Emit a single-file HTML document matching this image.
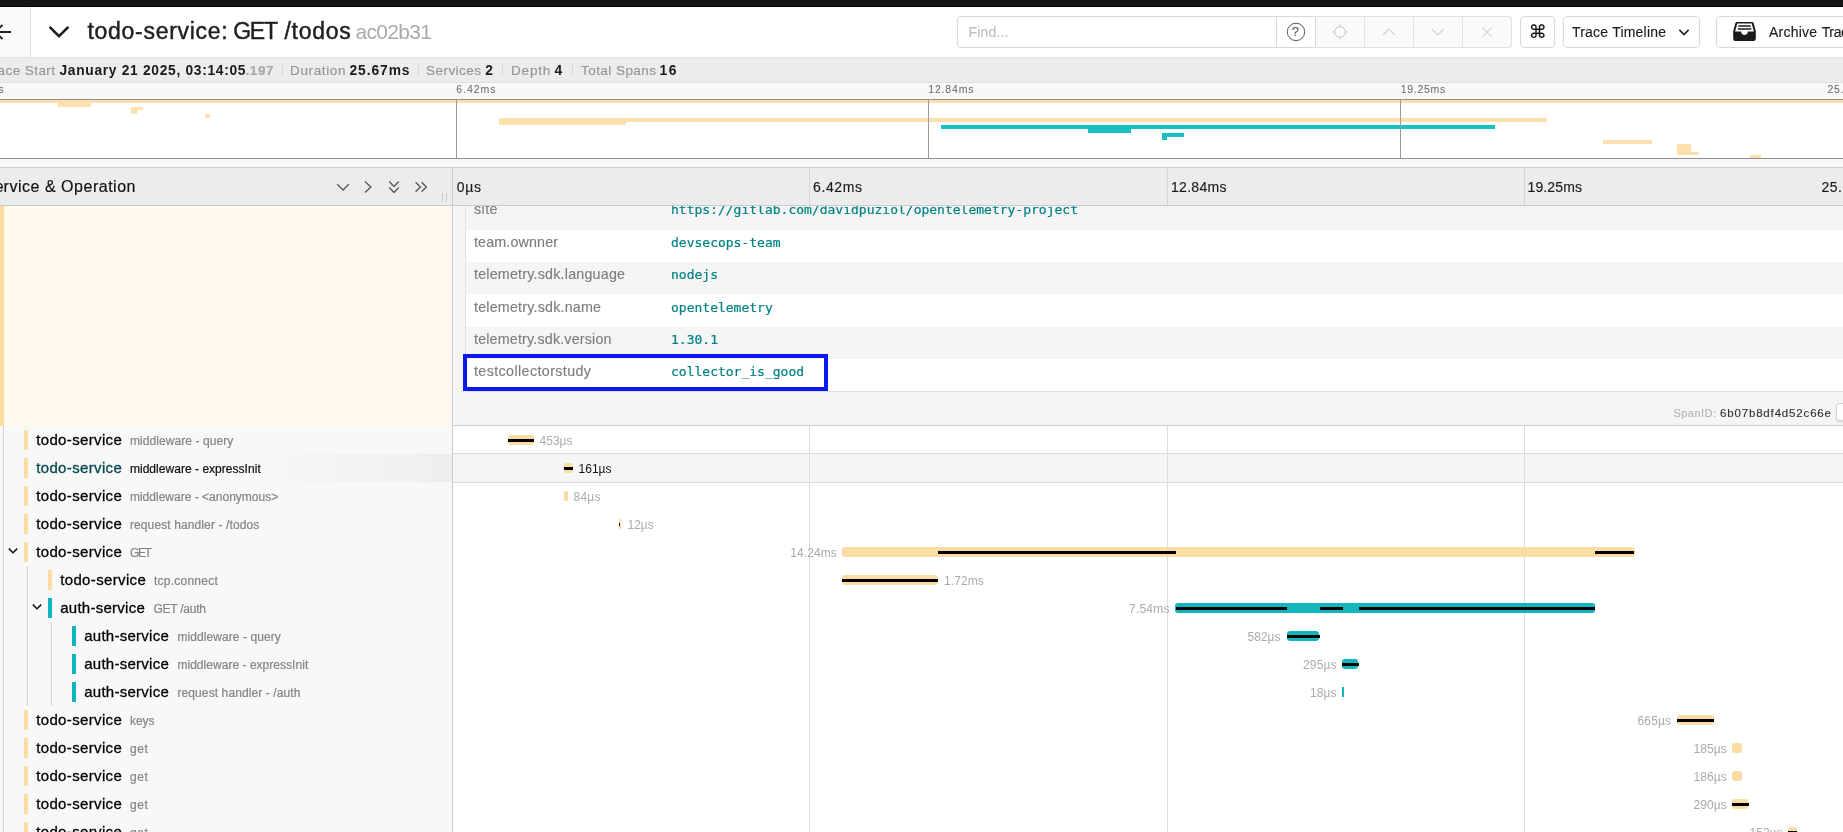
<!DOCTYPE html>
<html><head><meta charset="utf-8"><title>todo-service: GET /todos</title>
<style>
*{box-sizing:border-box;margin:0;padding:0}
html,body{width:1843px;height:832px;overflow:hidden;background:#fff}
body{font-family:"Liberation Sans",sans-serif;color:#222;position:relative;font-size:14px}
#root{position:absolute;left:0;top:0;width:1843px;height:832px;overflow:hidden;will-change:transform}
.a{position:absolute}
.t{position:absolute;white-space:nowrap;line-height:20px;height:20px}
svg{position:absolute;overflow:visible}
#topbar{left:0;top:0;width:1843px;height:7px;background:linear-gradient(#151515 0,#151515 6px,#020202 6px,#020202 7px)}
#hdr{left:0;top:7px;width:1843px;height:50px;background:#fff}
#hdrb{left:0;top:57px;width:1843px;height:1px;background:#e2e2e2}
#back{left:0;top:8px;width:30px;height:49px;background:#fafafa}
#backb{left:30px;top:7px;width:1px;height:50px;background:#dedede}
#sum{left:0;top:58px;width:1843px;height:24px;background:#ececec}
#sumb{left:0;top:82px;width:1843px;height:1px;background:#e0e0e0}
#ticks{left:0;top:83px;width:1843px;height:16px;background:#f8f8f8}
#mmtop{left:0;top:99px;width:1843px;height:1px;background:#8f8f8f}
#mm{left:0;top:100px;width:1843px;height:58px;background:#fff}
#mmbot{left:0;top:158px;width:1843px;height:1px;background:#8f8f8f}
#gap{left:0;top:159px;width:1843px;height:8px;background:#f8f8f8}
#thb1{left:0;top:167px;width:1843px;height:1px;background:#cbcbcb}
#th{left:0;top:168px;width:1843px;height:37px;background:#ececec}
#thb2{left:0;top:205px;width:1843px;height:1px;background:#cbcbcb}
.title{font-size:23px;color:#1f1f1f;-webkit-text-stroke:0.45px #1f1f1f}
.tid{font-size:21px;color:#aaa}
.sl{font-size:13.5px;color:#969696;-webkit-text-stroke:0.15px currentColor}
.sv{font-size:13.800px;color:#1a1a1a;font-weight:bold}
.sd{width:1px;height:12px;top:64px;background:#d8d8d8}
.mt{font-size:10.5px;color:#666}
.mtl{top:99px;width:1px;height:60px;background:#9a9a9a}
.btn{border:1px solid #d9d9d9;border-radius:4px;background:#fff;top:16px;height:32px}
.tl{font-size:14px;color:#1c1c1c;-webkit-text-stroke:0.15px currentColor}
.so{font-size:16px;color:#111;-webkit-text-stroke:0.18px #111}
.key{font-size:14.300px;color:#7d7d7d;-webkit-text-stroke:0.15px currentColor}
.val{font-family:"DejaVu Sans Mono","Liberation Mono",monospace;font-size:13px;color:#008284;-webkit-text-stroke:0.22px #008284}
.svc{font-size:15px;color:#000;-webkit-text-stroke:0.3px currentColor}
.op{font-size:12px;color:#858585;-webkit-text-stroke:0.22px currentColor}
.dur{font-size:12px;color:#aaa}
</style></head><body>
<div id="root">
<div class="a" id="topbar"></div>
<div class="a" id="hdr"></div>
<div class="a" id="hdrb"></div>
<div class="a" id="back"></div>
<div class="a" id="backb"></div>
<div class="a" id="sum"></div>
<div class="a" id="sumb"></div>
<div class="a" id="ticks"></div>
<div class="a" id="mm"></div>
<div class="a" id="mmtop"></div>
<div class="a" id="mmbot"></div>
<div class="a" id="gap"></div>
<svg style="left:0;top:22px" width="14" height="20" viewBox="0 0 14 20"><path d="M-4 10H11M2.500 2.800L-4.700 10L2.500 17.200" fill="none" stroke="#222" stroke-width="1.9"/></svg>
<svg style="left:46px;top:22px" width="26" height="20" viewBox="0 0 26 20"><path d="M3.6 4.8L13 14.2L22.4 4.8" fill="none" stroke="#1f1f1f" stroke-width="2.6"/></svg>
<div class="t title" style="left:87.5px;top:21.03px;letter-spacing:0.711px;">todo-service:</div>
<div class="t title" style="left:233.2px;top:21.03px;letter-spacing:-1.241px;">GET</div>
<div class="t title" style="left:284.5px;top:21.03px;letter-spacing:0.729px;">/todos</div>
<div class="t tid" style="left:355.5px;top:21.72px;letter-spacing:-0.680px;">ac02b31</div>
<div class="a" style="left:957px;top:16px;width:555px;height:32px;background:#fff;border:1px solid #d9d9d9;border-radius:4px"></div>
<div class="a" style="left:1315px;top:16px;width:197px;height:32px;background:#fafafa;border:1px solid #e2e2e2;border-radius:0 4px 4px 0"></div>
<div class="a" style="left:1276px;top:17px;width:1px;height:30px;background:#d9d9d9;"></div>
<div class="a" style="left:1315px;top:17px;width:1px;height:30px;background:#d9d9d9;"></div>
<div class="a" style="left:1364px;top:17px;width:1px;height:30px;background:#e2e2e2;"></div>
<div class="a" style="left:1413px;top:17px;width:1px;height:30px;background:#e2e2e2;"></div>
<div class="a" style="left:1462px;top:17px;width:1px;height:30px;background:#e2e2e2;"></div>
<div class="t tl" style="left:968.5px;top:22.25px;letter-spacing:0.182px;color:#bfbfbf">Find...</div>
<svg style="left:1286px;top:22px" width="20" height="20" viewBox="0 0 20 20"><circle cx="10" cy="9.900" r="8.700" fill="none" stroke="#595959" stroke-width="1"/></svg>
<div class="t tl" style="left:1291.8px;top:22.0px;font-size:13px;color:#595959">?</div>
<svg style="left:1330px;top:22px" width="20" height="20" viewBox="0 0 20 20"><circle cx="10" cy="9.900" r="5.300" fill="none" stroke="#d2d2d2" stroke-width="1.3"/><path d="M10 2.100V4.600M10 15.200V17.700M2.200 9.900H4.700M15.300 9.900H17.800" stroke="#d2d2d2" stroke-width="1.3"/></svg>
<svg style="left:1379px;top:22px" width="20" height="20" viewBox="0 0 20 20"><path d="M4.100 13L9.900 7.200L15.700 13" fill="none" stroke="#d2d2d2" stroke-width="1.2"/></svg>
<svg style="left:1428px;top:22px" width="20" height="20" viewBox="0 0 20 20"><path d="M4.100 7.200L9.900 13L15.700 7.200" fill="none" stroke="#d2d2d2" stroke-width="1.2"/></svg>
<svg style="left:1477px;top:22px" width="20" height="20" viewBox="0 0 20 20"><path d="M5.400 5.300L14.600 14.900M14.600 5.300L5.400 14.900" fill="none" stroke="#d2d2d2" stroke-width="1.2"/></svg>
<div class="a btn" style="left:1520px;width:35px"></div>
<div class="t tl" style="left:1528.8px;top:22.060000000000002px;font-family:'DejaVu Sans',sans-serif;font-size:18px;color:#111">&#8984;</div>
<div class="a btn" style="left:1563px;width:137px"></div>
<div class="t tl" style="left:1572px;top:22.25px;letter-spacing:0.208px;">Trace Timeline</div>
<svg style="left:1674px;top:22px" width="20" height="20" viewBox="0 0 20 20"><path d="M5.400 7.900L10 12.500L14.600 7.900" fill="none" stroke="#222" stroke-width="1.6"/></svg>
<div class="a btn" style="left:1716px;width:160px"></div>
<svg style="left:1733px;top:22px" width="23" height="19" viewBox="0 0 23 19"><path d="M4.100 0H18.900a1.800 1.800 0 0 1 1.750 1.350L22.800 9V16.800a2.200 2.200 0 0 1-2.200 2.200H2.400a2.200 2.200 0 0 1-2.200-2.200V9L2.350 1.350A1.800 1.800 0 0 1 4.100 0z" fill="#1a1a1a"/><path d="M4.300 1.600H18.700L20.900 9.500H14.800c0 2-1.300 3.500-3.300 3.500s-3.300-1.500-3.300-3.500H2.100z" fill="#fff"/><path d="M5.300 4H17.700" stroke="#4a4a4a" stroke-width="1.9"/><path d="M4.900 7H18.300" stroke="#1a1a1a" stroke-width="1.500"/></svg>
<div class="t tl" style="left:1769px;top:22.25px;letter-spacing:0.219px;">Archive</div>
<div class="t tl" style="left:1821.7px;top:22.25px;letter-spacing:-0.35px">Trace</div>
<div class="t sl" style="right:1845.5px;top:60.72px;">Tr</div>
<div class="t sl" style="left:-2.5px;top:60.72px;letter-spacing:0.434px;">ace Start</div>
<div class="t sv" style="left:59.5px;top:60.620000000000005px;letter-spacing:0.686px;">January 21 2025, 03:14:05</div>
<div class="t sl" style="left:245.5px;top:60.72px;letter-spacing:0.573px;color:#a8a8a8;font-weight:bold">.197</div>
<div class="t sl" style="left:290px;top:60.72px;letter-spacing:0.638px;">Duration</div>
<div class="t sv" style="left:349.5px;top:60.620000000000005px;letter-spacing:0.922px;">25.67ms</div>
<div class="t sl" style="left:426px;top:60.72px;letter-spacing:0.462px;">Services</div>
<div class="t sv" style="left:485.3px;top:60.620000000000005px;letter-spacing:1.312px;">2</div>
<div class="t sl" style="left:511px;top:60.72px;letter-spacing:0.817px;">Depth</div>
<div class="t sv" style="left:554.5px;top:60.620000000000005px;letter-spacing:1.612px;">4</div>
<div class="t sl" style="left:581px;top:60.72px;letter-spacing:0.445px;">Total Spans</div>
<div class="t sv" style="left:659.5px;top:60.620000000000005px;letter-spacing:1.641px;">16</div>
<div class="a sd" style="left:282px"></div>
<div class="a sd" style="left:418px"></div>
<div class="a sd" style="left:502px"></div>
<div class="a sd" style="left:572px"></div>
<div class="t mt" style="right:1839.2px;top:79.36px;">0&micro;s</div>
<div class="t mt" style="left:456.2px;top:79.36px;letter-spacing:0.993px;">6.42ms</div>
<div class="t mt" style="left:928.2px;top:79.36px;letter-spacing:0.853px;">12.84ms</div>
<div class="t mt" style="left:1400.7px;top:79.36px;letter-spacing:0.703px;">19.25ms</div>
<div class="t mt" style="left:1827.5px;top:79.36px;letter-spacing:0.7px">25.67ms</div>
<div class="a" style="left:0px;top:100px;width:1843px;height:2.75px;background:#fce1ae;"></div>
<div class="a" style="left:57.75px;top:102.75px;width:33.25px;height:3.75px;background:#fce1ae;"></div>
<div class="a" style="left:131px;top:106.5px;width:12px;height:3.75px;background:#fce1ae;"></div>
<div class="a" style="left:131px;top:110.25px;width:6px;height:3.75px;background:#fce1ae;"></div>
<div class="a" style="left:205px;top:114.0px;width:5px;height:3.75px;background:#fce1ae;"></div>
<div class="a" style="left:499.25px;top:117.75px;width:1047.5px;height:3.75px;background:#fce1ae;"></div>
<div class="a" style="left:499.25px;top:121.5px;width:127.0px;height:3.75px;background:#fce1ae;"></div>
<div class="a" style="left:941px;top:125.25px;width:554px;height:3.75px;background:#15bfc4;"></div>
<div class="a" style="left:1088.25px;top:129.0px;width:43.0px;height:3.75px;background:#15bfc4;"></div>
<div class="a" style="left:1161.75px;top:132.75px;width:21.75px;height:3.75px;background:#15bfc4;"></div>
<div class="a" style="left:1161.75px;top:136.5px;width:4.75px;height:3.75px;background:#15bfc4;"></div>
<div class="a" style="left:1603.25px;top:140.25px;width:49.0px;height:3.75px;background:#fce1ae;"></div>
<div class="a" style="left:1677px;top:144.0px;width:13.5px;height:3.75px;background:#fce1ae;"></div>
<div class="a" style="left:1677px;top:147.75px;width:13.5px;height:3.75px;background:#fce1ae;"></div>
<div class="a" style="left:1677px;top:151.5px;width:21.5px;height:3.75px;background:#fce1ae;"></div>
<div class="a" style="left:1750px;top:155.25px;width:11px;height:2.75px;background:#fce1ae;"></div>
<div class="a mtl" style="left:456px"></div>
<div class="a mtl" style="left:928px"></div>
<div class="a mtl" style="left:1400px"></div>
<div class="a" style="left:0px;top:206px;width:452px;height:220px;background:#fff8ec;"></div>
<div class="a" style="left:0px;top:206px;width:4px;height:220px;background:#fbdda3;"></div>
<div class="a" style="left:452px;top:206px;width:1px;height:626px;background:#cbcbcb;"></div>
<div class="a" style="left:453px;top:206px;width:1390px;height:219px;background:#f5f5f5;"></div>
<div class="a" style="left:465px;top:206px;width:1px;height:185px;background:#e4e4e4;"></div>
<div class="t key" style="left:474px;top:198.85px;letter-spacing:0.417px;">site</div>
<div class="t val" style="left:671px;top:199.6px;">https://gitlab.com/davidpuziol/opentelemetry-project</div>
<div class="a" style="left:466px;top:229.6px;width:1377px;height:32.35px;background:#fff;"></div>
<div class="t key" style="left:474px;top:231.95px;letter-spacing:0.134px;">team.ownner</div>
<div class="t val" style="left:671px;top:232.8px;">devsecops-team</div>
<div class="t key" style="left:474px;top:264.25px;letter-spacing:0.202px;">telemetry.sdk.language</div>
<div class="t val" style="left:671px;top:265.1px;">nodejs</div>
<div class="a" style="left:466px;top:294.3px;width:1377px;height:32.35px;background:#fff;"></div>
<div class="t key" style="left:474px;top:296.65px;letter-spacing:0.195px;">telemetry.sdk.name</div>
<div class="t val" style="left:671px;top:297.5px;">opentelemetry</div>
<div class="t key" style="left:474px;top:328.95px;letter-spacing:0.174px;">telemetry.sdk.version</div>
<div class="t val" style="left:671px;top:329.8px;">1.30.1</div>
<div class="a" style="left:466px;top:359.0px;width:1377px;height:32.0px;background:#fff;"></div>
<div class="t key" style="left:474px;top:361.35px;letter-spacing:0.385px;">testcollectorstudy</div>
<div class="t val" style="left:671px;top:362.2px;">collector_is_good</div>
<div class="a" style="left:466px;top:391px;width:1377px;height:1px;background:#dedede;"></div>
<div class="a" style="left:463px;top:354px;width:365px;height:37px;border:4.500px solid #0a19ef"></div>
<div class="t tl" style="left:1673.5px;top:403.09px;letter-spacing:0.458px;font-size:11px;color:#b5b5b5">SpanID:</div>
<div class="t tl" style="left:1720px;top:402.92px;letter-spacing:0.833px;font-size:11.5px;color:#333">6b07b8df4d52c66e</div>
<div class="a" style="left:1836px;top:403px;width:12px;height:18px;background:#fdfdfd;border:1px solid #d5d5d5;border-radius:3px;box-shadow:0 1px 2px rgba(0,0,0,.12)"></div>
<div class="a" style="left:453px;top:425px;width:1390px;height:1px;background:#cbcbcb;"></div>
<div class="a" style="left:0px;top:426px;width:452px;height:406px;background:#f8f8f8;"></div>
<div class="a" style="left:453px;top:426px;width:1390px;height:406px;background:#fff;"></div>
<div class="a" style="left:0;top:454px;width:452px;height:28px;background:linear-gradient(90deg,#f8f8f8 0%,#f8f8f8 55%,#eeeeee 100%)"></div>
<div class="a" style="left:453px;top:454px;width:1390px;height:28px;background:#f5f5f5;"></div>
<div class="a" style="left:453px;top:453px;width:1390px;height:1px;background:#dcdcdc;"></div>
<div class="a" style="left:453px;top:482px;width:1390px;height:1px;background:#dcdcdc;"></div>
<div class="a" style="left:809px;top:426px;width:1px;height:406px;background:#dcdcdc;"></div>
<div class="a" style="left:1167px;top:426px;width:1px;height:406px;background:#dcdcdc;"></div>
<div class="a" style="left:1524px;top:426px;width:1px;height:406px;background:#dcdcdc;"></div>
<div class="a" style="left:3px;top:426px;width:1px;height:406px;background:#d4d4d4;"></div>
<div class="a" style="left:27px;top:566px;width:1px;height:140px;background:#d4d4d4;"></div>
<div class="a" style="left:51px;top:622px;width:1px;height:84px;background:#d4d4d4;"></div>
<div class="a" style="left:24px;top:430px;width:4px;height:20px;background:#fbdda3;"></div>
<div class="t svc" style="left:36.2px;top:429.8px;letter-spacing:0.354px;">todo-service</div>
<div class="t op" style="left:129.95px;top:431.24px;letter-spacing:0.074px;">middleware - query</div>
<div class="a" style="left:508px;top:435px;width:26px;height:10px;background:#fbdda3;border-radius:3px"></div>
<div class="a" style="left:508px;top:439px;width:25.5px;height:3.15px;background:#000;"></div>
<div class="t dur" style="left:539.5px;top:430.84px;letter-spacing:0.016px;">453&micro;s</div>
<div class="a" style="left:24px;top:458px;width:4px;height:20px;background:#fbdda3;"></div>
<div class="t svc" style="left:36.2px;top:457.8px;letter-spacing:0.354px;color:#00474e">todo-service</div>
<div class="t op" style="left:129.95px;top:459.24px;letter-spacing:0.032px;color:#111">middleware - expressInit</div>
<div class="a" style="left:564px;top:463px;width:9px;height:10px;background:#fbdda3;border-radius:3px"></div>
<div class="a" style="left:564px;top:467px;width:9px;height:3.15px;background:#000;"></div>
<div class="t dur" style="left:578.5px;top:458.84px;letter-spacing:0.016px;color:#111">161&micro;s</div>
<div class="a" style="left:24px;top:486px;width:4px;height:20px;background:#fbdda3;"></div>
<div class="t svc" style="left:36.2px;top:485.8px;letter-spacing:0.354px;">todo-service</div>
<div class="t op" style="left:129.95px;top:487.24px;letter-spacing:0.010px;">middleware - &lt;anonymous&gt;</div>
<div class="a" style="left:564px;top:491px;width:4px;height:10px;background:#fbdda3;border-radius:1.5px"></div>
<div class="t dur" style="left:573.5px;top:486.84px;letter-spacing:0.245px;">84&micro;s</div>
<div class="a" style="left:24px;top:514px;width:4px;height:20px;background:#fbdda3;"></div>
<div class="t svc" style="left:36.2px;top:513.8px;letter-spacing:0.354px;">todo-service</div>
<div class="t op" style="left:129.95px;top:515.24px;letter-spacing:0.111px;">request handler - /todos</div>
<div class="a" style="left:619px;top:519px;width:2px;height:10px;background:#fbdda3;border-radius:0px"></div>
<div class="a" style="left:619px;top:523px;width:1px;height:3.15px;background:#000;"></div>
<div class="t dur" style="left:627.5px;top:514.84px;letter-spacing:-0.022px;">12&micro;s</div>
<div class="a" style="left:24px;top:542px;width:4px;height:20px;background:#fbdda3;"></div>
<svg style="left:3px;top:541px" width="20" height="20" viewBox="0 0 20 20"><path d="M5.8 7.6L10 11.800L14.200 7.600" fill="none" stroke="#111" stroke-width="1.5"/></svg>
<div class="t svc" style="left:36.2px;top:541.8px;letter-spacing:0.354px;">todo-service</div>
<div class="t op" style="left:129.95px;top:543.24px;letter-spacing:-1.336px;">GET</div>
<div class="a" style="left:842px;top:547px;width:793px;height:10px;background:#fbdda3;border-radius:3px"></div>
<div class="a" style="left:938px;top:551px;width:238px;height:3.15px;background:#000;"></div>
<div class="a" style="left:1595px;top:551px;width:39px;height:3.15px;background:#000;"></div>
<div class="t dur" style="left:790.3px;top:542.84px;letter-spacing:0.061px;">14.24ms</div>
<div class="a" style="left:48px;top:570px;width:4px;height:20px;background:#fbdda3;"></div>
<div class="t svc" style="left:60.2px;top:569.8px;letter-spacing:0.354px;">todo-service</div>
<div class="t op" style="left:153.95px;top:571.24px;letter-spacing:0.243px;">tcp.connect</div>
<div class="a" style="left:842px;top:575px;width:96px;height:10px;background:#fbdda3;border-radius:3px"></div>
<div class="a" style="left:842px;top:579px;width:96px;height:3.15px;background:#000;"></div>
<div class="t dur" style="left:944px;top:570.84px;letter-spacing:0.068px;">1.72ms</div>
<div class="a" style="left:48px;top:598px;width:4px;height:20px;background:#0fb6bd;"></div>
<svg style="left:27px;top:597px" width="20" height="20" viewBox="0 0 20 20"><path d="M5.8 7.6L10 11.800L14.200 7.600" fill="none" stroke="#111" stroke-width="1.5"/></svg>
<div class="t svc" style="left:60.2px;top:597.8px;letter-spacing:0.263px;">auth-service</div>
<div class="t op" style="left:153.45px;top:599.24px;letter-spacing:-0.248px;">GET /auth</div>
<div class="a" style="left:1175px;top:603px;width:420px;height:10px;background:#0fb6bd;border-radius:3px"></div>
<div class="a" style="left:1176px;top:607px;width:111px;height:3.15px;background:#000;"></div>
<div class="a" style="left:1320px;top:607px;width:23px;height:3.15px;background:#000;"></div>
<div class="a" style="left:1359px;top:607px;width:236px;height:3.15px;background:#000;"></div>
<div class="t dur" style="left:1129px;top:598.84px;letter-spacing:0.228px;">7.54ms</div>
<div class="a" style="left:72px;top:626px;width:4px;height:20px;background:#0fb6bd;"></div>
<div class="t svc" style="left:84.2px;top:625.8px;letter-spacing:0.263px;">auth-service</div>
<div class="t op" style="left:177.45px;top:627.24px;letter-spacing:0.074px;">middleware - query</div>
<div class="a" style="left:1287px;top:631px;width:32px;height:10px;background:#0fb6bd;border-radius:3px"></div>
<div class="a" style="left:1287px;top:635px;width:33px;height:3.15px;background:#000;"></div>
<div class="t dur" style="left:1247.5px;top:626.84px;letter-spacing:0.016px;">582&micro;s</div>
<div class="a" style="left:72px;top:654px;width:4px;height:20px;background:#0fb6bd;"></div>
<div class="t svc" style="left:84.2px;top:653.8px;letter-spacing:0.263px;">auth-service</div>
<div class="t op" style="left:177.45px;top:655.24px;letter-spacing:0.032px;">middleware - expressInit</div>
<div class="a" style="left:1342px;top:659px;width:16px;height:10px;background:#0fb6bd;border-radius:3px"></div>
<div class="a" style="left:1342px;top:663px;width:17px;height:3.15px;background:#000;"></div>
<div class="t dur" style="left:1303px;top:654.84px;letter-spacing:0.141px;">295&micro;s</div>
<div class="a" style="left:72px;top:682px;width:4px;height:20px;background:#0fb6bd;"></div>
<div class="t svc" style="left:84.2px;top:681.8px;letter-spacing:0.263px;">auth-service</div>
<div class="t op" style="left:177.45px;top:683.24px;letter-spacing:0.102px;">request handler - /auth</div>
<div class="a" style="left:1342px;top:687px;width:2px;height:10px;background:#0fb6bd;border-radius:0px"></div>
<div class="t dur" style="left:1310px;top:682.84px;letter-spacing:0.078px;">18&micro;s</div>
<div class="a" style="left:24px;top:710px;width:4px;height:20px;background:#fbdda3;"></div>
<div class="t svc" style="left:36.2px;top:709.8px;letter-spacing:0.354px;">todo-service</div>
<div class="t op" style="left:129.95px;top:711.24px;letter-spacing:-0.062px;">keys</div>
<div class="a" style="left:1677px;top:715px;width:37px;height:10px;background:#fbdda3;border-radius:3px"></div>
<div class="a" style="left:1677px;top:719px;width:37px;height:3.15px;background:#000;"></div>
<div class="t dur" style="left:1637.5px;top:710.84px;letter-spacing:0.141px;">665&micro;s</div>
<div class="a" style="left:24px;top:738px;width:4px;height:20px;background:#fbdda3;"></div>
<div class="t svc" style="left:36.2px;top:737.8px;letter-spacing:0.354px;">todo-service</div>
<div class="t op" style="left:129.95px;top:739.24px;letter-spacing:0.656px;">get</div>
<div class="a" style="left:1732px;top:743px;width:10px;height:10px;background:#fbdda3;border-radius:3px"></div>
<div class="t dur" style="left:1693.5px;top:738.84px;letter-spacing:0.066px;">185&micro;s</div>
<div class="a" style="left:24px;top:766px;width:4px;height:20px;background:#fbdda3;"></div>
<div class="t svc" style="left:36.2px;top:765.8px;letter-spacing:0.354px;">todo-service</div>
<div class="t op" style="left:129.95px;top:767.24px;letter-spacing:0.656px;">get</div>
<div class="a" style="left:1732px;top:771px;width:10px;height:10px;background:#fbdda3;border-radius:3px"></div>
<div class="t dur" style="left:1693.5px;top:766.84px;letter-spacing:0.066px;">186&micro;s</div>
<div class="a" style="left:24px;top:794px;width:4px;height:20px;background:#fbdda3;"></div>
<div class="t svc" style="left:36.2px;top:793.8px;letter-spacing:0.354px;">todo-service</div>
<div class="t op" style="left:129.95px;top:795.24px;letter-spacing:0.656px;">get</div>
<div class="a" style="left:1732px;top:799px;width:16px;height:10px;background:#fbdda3;border-radius:3px"></div>
<div class="a" style="left:1732px;top:803px;width:17px;height:3.15px;background:#000;"></div>
<div class="t dur" style="left:1693.5px;top:794.84px;letter-spacing:0.066px;">290&micro;s</div>
<div class="a" style="left:24px;top:822px;width:4px;height:20px;background:#fbdda3;"></div>
<div class="t svc" style="left:36.2px;top:821.8px;letter-spacing:0.354px;">todo-service</div>
<div class="t op" style="left:129.95px;top:823.24px;letter-spacing:0.656px;">get</div>
<div class="a" style="left:1788px;top:827px;width:9px;height:10px;background:#fbdda3;border-radius:3px"></div>
<div class="a" style="left:1788px;top:831px;width:9px;height:3.15px;background:#000;"></div>
<div class="t dur" style="left:1749.5px;top:822.84px;letter-spacing:0.016px;">152&micro;s</div>
<div class="a" id="thb1"></div>
<div class="a" id="th"></div>
<div class="a" id="thb2"></div>
<div class="t so" style="right:1839.4px;top:177.46px;">Se</div>
<div class="t so" style="left:3.6px;top:177.46px;letter-spacing:0.518px;">rvice &amp; Operation</div>
<svg style="left:333px;top:177px" width="20" height="20" viewBox="0 0 20 20"><path d="M4.2 7.2L10 13L15.8 7.2" fill="none" stroke="#5a5a5a" stroke-width="1.4"/></svg>
<svg style="left:358px;top:177px" width="20" height="20" viewBox="0 0 20 20"><path d="M7 4.4L12.8 10L7 15.6" fill="none" stroke="#5a5a5a" stroke-width="1.4"/></svg>
<svg style="left:384px;top:177px" width="20" height="20" viewBox="0 0 20 20"><path d="M5.200 4.600L10 9.400L14.800 4.600M5.200 10.600L10 15.400L14.800 10.600" fill="none" stroke="#5a5a5a" stroke-width="1.4"/></svg>
<svg style="left:411px;top:177px" width="20" height="20" viewBox="0 0 20 20"><path d="M4.600 5.200L9.400 10L4.600 14.800M10.600 5.200L15.400 10L10.600 14.800" fill="none" stroke="#5a5a5a" stroke-width="1.4"/></svg>
<div class="a" style="left:442.4px;top:193px;width:1px;height:9px;background:#cfcfcf;"></div>
<div class="a" style="left:445.7px;top:193px;width:1px;height:9px;background:#cfcfcf;"></div>
<div class="a" style="left:452px;top:168px;width:1px;height:37px;background:#cbcbcb;"></div>
<div class="a" style="left:809px;top:168px;width:1px;height:37px;background:#d6d6d6;"></div>
<div class="a" style="left:1167px;top:168px;width:1px;height:37px;background:#d6d6d6;"></div>
<div class="a" style="left:1524px;top:168px;width:1px;height:37px;background:#d6d6d6;"></div>
<div class="t tl" style="left:456.8px;top:177.15px;letter-spacing:0.670px;">0&micro;s</div>
<div class="t tl" style="left:813px;top:177.15px;letter-spacing:0.616px;">6.42ms</div>
<div class="t tl" style="left:1171px;top:177.15px;letter-spacing:0.299px;">12.84ms</div>
<div class="t tl" style="left:1527.5px;top:177.15px;letter-spacing:0.133px;">19.25ms</div>
<div class="t tl" style="left:1821.5px;top:177.15px;letter-spacing:0.45px">25.67ms</div>
</div>
</body></html>
